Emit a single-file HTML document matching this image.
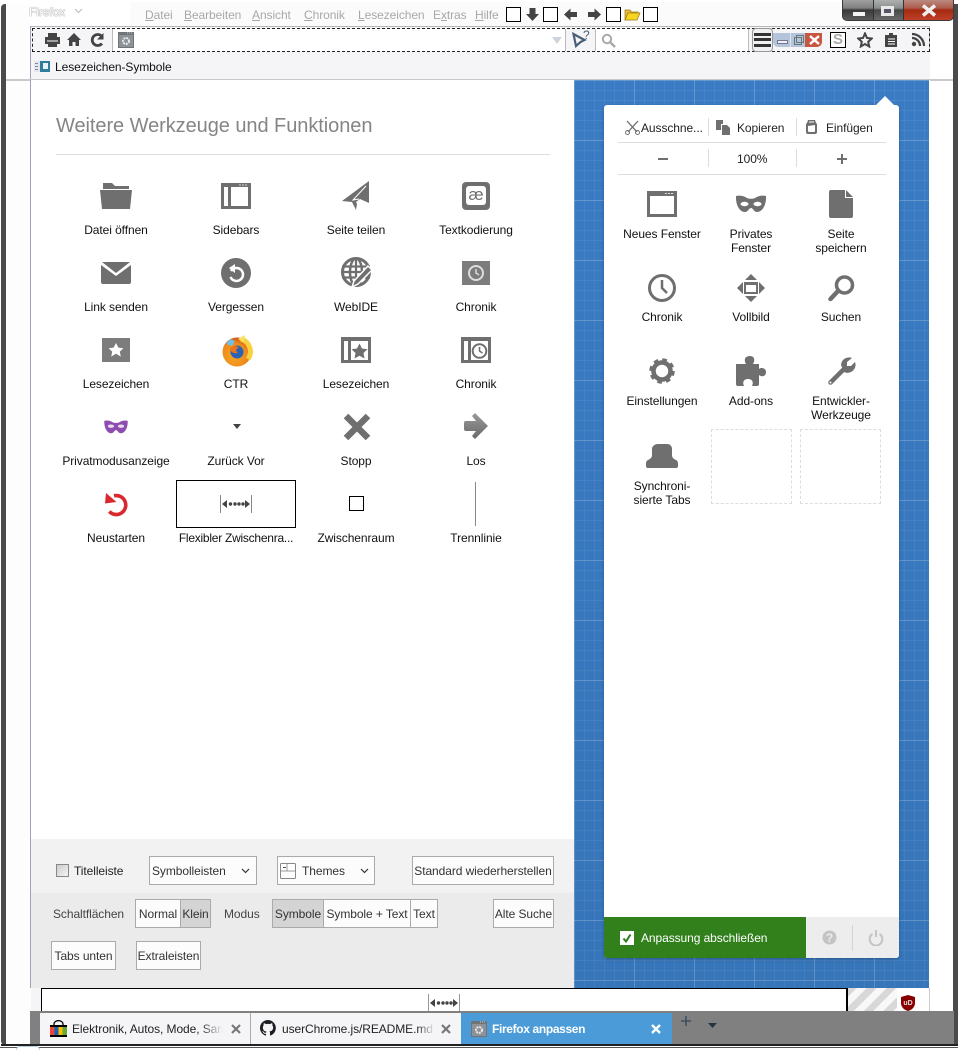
<!DOCTYPE html>
<html lang="de"><head><meta charset="utf-8"><title>Firefox anpassen</title>
<style>
html,body{margin:0;padding:0;width:960px;height:1050px;overflow:hidden;background:#fff}
body{position:relative;font:12px "Liberation Sans",sans-serif;color:#111;letter-spacing:-.08px}
.a,.l,.b,.m,svg{position:absolute}
.l{width:120px;text-align:center;white-space:nowrap;line-height:14px;height:14px}
.w{width:90px;height:auto}
.b{box-sizing:border-box;border:1px solid #aaa;background:#fcfcfc;height:29px;line-height:28px;text-align:center;color:#333;white-space:nowrap}
.m{top:8px;color:#a8a8a8;line-height:14px;white-space:nowrap}
.m u{text-decoration:underline}
.s{position:absolute;box-sizing:border-box;width:15px;height:15px;border:1px solid #000;background:#fff}
.g{fill:#6f6f6f}
.t{color:#222;line-height:14px;white-space:nowrap}
</style></head><body>
<!-- window frame -->
<div class="a" style="left:0;top:0;width:960px;height:1050px;background:#fff"></div>
<div class="a" style="left:1px;top:4px;width:5px;height:1041px;background:#4a4a4a;border-radius:4px 0 0 4px"></div>
<div class="a" style="left:6px;top:4px;width:24px;height:1040px;background:#fdfdfd"></div>
<div class="a" style="left:6px;top:79px;width:24px;height:2px;background:#c9c9c9"></div>
<div class="a" style="left:953px;top:4px;width:5px;height:1041px;background:#4a4a4a"></div>
<div class="a" style="left:930px;top:79px;width:23px;height:2px;background:#c9c9c9"></div>
<div class="a" style="left:1px;top:1044px;width:957px;height:2px;background:#222"></div>
<div class="a" style="left:0;top:1047px;width:958px;height:1px;background:#555"></div>
<div class="a" style="left:16px;top:1046px;width:24px;height:4px;background:#fff;border:1px solid #b5cfe0;border-bottom:0;box-sizing:border-box;border-radius:12px 12px 0 0"></div>
<div class="a" style="left:130px;top:2px;width:710px;height:24px;background:#fbfbfb"></div>
<!-- title -->
<div class="a" style="left:29px;top:5px;color:#fff;font-size:12px;line-height:14px;text-shadow:0 0 1px #888,0 0 1px #888">Firefox</div>
<svg style="left:74px;top:8px" width="9" height="6"><path d="M1 1l3.500 3.500L8 1" fill="none" stroke="#bbb"/></svg>
<div class="m" style="left:145px"><u>D</u>atei</div>
<div class="m" style="left:184px"><u>B</u>earbeiten</div>
<div class="m" style="left:252px"><u>A</u>nsicht</div>
<div class="m" style="left:304px"><u>C</u>hronik</div>
<div class="m" style="left:358px"><u>L</u>esezeichen</div>
<div class="m" style="left:433px">E<u>x</u>tras</div>
<div class="m" style="left:475px"><u>H</u>ilfe</div>
<div class="s" style="left:506px;top:7px"></div>
<svg style="left:525px;top:7px" width="15" height="15"><path d="M4.500 1h6v6H14L7.500 14 1 7h3.500z" fill="#444"/></svg>
<div class="s" style="left:543px;top:7px"></div>
<svg style="left:563px;top:7px" width="15" height="15"><path d="M7.500 1.500L1 7.500l6.500 6V10H14V5H7.500z" fill="#444"/></svg>
<svg style="left:587px;top:7px" width="15" height="15"><path d="M7.500 1.500L14 7.500l-6.500 6V10H1V5h6.500z" fill="#444"/></svg>
<div class="s" style="left:606px;top:7px"></div>
<svg style="left:624px;top:7px" width="17" height="15"><path d="M1 13V3h5l1.500 2H14v2H5z" fill="#e8b93a" stroke="#9a7a10" stroke-width=".7"/><path d="M1 13l3-7h12l-3 7z" fill="#f8d520" stroke="#9a7a10" stroke-width=".7"/></svg>
<div class="s" style="left:643px;top:7px"></div>
<!-- caption buttons -->
<div class="a" style="left:842px;top:0;width:112px;height:21px;border-radius:0 0 5px 5px;background:#333;box-sizing:border-box;border:1px solid #3a3a3a;border-top:0;overflow:hidden">
 <div class="a" style="left:0;top:0;width:30px;height:20px;background:linear-gradient(#a0a0a0 0,#808080 40%,#3a3a3a 50%,#5c5c5c 100%)"></div>
 <div class="a" style="left:31px;top:0;width:29px;height:20px;background:linear-gradient(#aeb0b0 0,#8c8f90 40%,#484848 50%,#6a6a6a 100%)"></div>
 <div class="a" style="left:61px;top:0;width:49px;height:20px;background:linear-gradient(#bb8a80 0,#ad5c4c 40%,#a42a10 50%,#c04028 100%)"></div>
 <div class="a" style="left:10px;top:12px;width:12px;height:4px;background:#f4f4f4"></div>
 <div class="a" style="left:38px;top:6px;width:13px;height:10px;box-sizing:border-box;border:3px solid #e8e8e8;background:#556"></div>
 <svg style="left:77px;top:4px" width="18" height="13"><path d="M3 1.500l12 10M15 1.500l-12 10" stroke="#eee" stroke-width="3.500"/></svg>
</div>
<!-- toolbars -->
<div class="a" style="left:30px;top:26px;width:900px;height:1px;background:#b8b8b8"></div>
<div class="a" style="left:30px;top:27px;width:900px;height:25px;background:#f5f5f7"></div>
<div class="a" style="left:30px;top:26px;width:1px;height:962px;background:#9aa6b4"></div>
<div class="a" style="left:929px;top:26px;width:1px;height:54px;background:#c4c4c4"></div>
<div class="a" style="left:32px;top:28px;width:898px;height:24px;box-sizing:border-box;border:1px dashed #222"></div>
<div class="a" style="left:112px;top:29px;width:453px;height:22px;background:#fff;border-left:1px solid #bbb"></div>
<div class="a" style="left:565px;top:29px;width:1px;height:22px;background:#bbb"></div>
<div class="a" style="left:595px;top:29px;width:152px;height:22px;background:#fff;border-left:1px solid #bbb;border-right:1px solid #bbb"></div>
<svg style="left:44px;top:32px" width="17" height="16"><path d="M4 1h9v4h3v7h-3v3H4v-3H1V5h3z" fill="#444"/><path d="M3 9h11" stroke="#fff"/><path d="M5 3h7" stroke="#444"/></svg>
<svg style="left:66px;top:32px" width="16" height="15"><path d="M8 1L1 8h2v6h3.500v-4h3v4H13V8h2z" fill="#444"/></svg>
<svg style="left:90px;top:32px" width="15" height="15"><path d="M12 11.500A5.500 5.500 0 1 1 11.500 4" fill="none" stroke="#444" stroke-width="2.800"/><path d="M13.500 1v6.500H7z" fill="#444"/></svg>
<svg style="left:118px;top:32px" width="16" height="16"><rect width="16" height="16" fill="#6e7478"/><rect x="1" y="3" width="14" height="12" fill="#8d9296"/><path d="M9 1h5" stroke="#ccc" stroke-dasharray="1 1"/><circle cx="8" cy="9" r="3" fill="none" stroke="#e8e8e8" stroke-width="2" stroke-dasharray="2 .8"/></svg>
<svg style="left:551px;top:36px" width="12" height="9"><path d="M1 1h10L6 8z" fill="#ced4da"/></svg>
<svg style="left:571px;top:30px" width="19" height="18"><path d="M2.500 4l11 6-4 2L5 16z" fill="none" stroke="#4a6078" stroke-width="2.200"/><text x="12" y="9" font-size="12" font-family="Liberation Sans" fill="#4a6078">?</text></svg>
<svg style="left:601px;top:33px" width="15" height="15"><circle cx="6" cy="6" r="4.200" fill="none" stroke="#aaa" stroke-width="2"/><path d="M9 9l5 5" stroke="#aaa" stroke-width="2.500"/></svg>
<div class="a" style="left:752px;top:28px;width:21px;height:24px;box-sizing:border-box;background:#f0f0f0;border:1px solid #999;border-radius:4px"></div>
<div class="a" style="left:754px;top:33px;width:17px;height:3px;background:#333"></div>
<div class="a" style="left:754px;top:38px;width:17px;height:3px;background:#333"></div>
<div class="a" style="left:754px;top:44px;width:17px;height:3px;background:#333"></div>
<div class="a" style="left:773px;top:33px;width:49px;height:14px;border-radius:0 0 5px 5px;background:linear-gradient(90deg,#b4c4da 0,#b4c4da 32px,#c85540 32px);overflow:hidden">
<div class="a" style="left:4px;top:7px;width:9px;height:2px;background:#eef;border:1px solid #778"></div>
<div class="a" style="left:17px;top:0;width:1px;height:14px;background:#dfe7f0"></div>
<div class="a" style="left:21px;top:4px;width:6px;height:6px;border:1px solid #677"></div>
<div class="a" style="left:23px;top:2px;width:6px;height:6px;border:1px solid #677"></div>
<svg style="left:34px;top:1px" width="15" height="12"><path d="M3 2l9 8M12 2l-9 8" stroke="#fff" stroke-width="2.500"/></svg></div>
<div class="a" style="left:830px;top:32px;width:16px;height:16px;box-sizing:border-box;border:1px solid #000;background:#fff;color:#aaa;text-align:center;font:bold 15px/14px 'Liberation Sans',sans-serif">S</div>
<svg style="left:857px;top:32px" width="16" height="16"><path d="M8 1.500l2 4.500 4.800.5-3.600 3.200 1 4.800L8 12l-4.200 2.500 1-4.800L1.200 6.500 6 6z" fill="none" stroke="#444" stroke-width="2"/></svg>
<svg style="left:884px;top:32px" width="15" height="16"><path d="M1 3h4V1h4v2h4v12H1z" fill="#444"/><path d="M4 7h7M4 9.500h7M4 12h7" stroke="#fff"/></svg>
<svg style="left:911px;top:32px" width="15" height="15"><circle cx="3" cy="12" r="2.200" fill="#444"/><path d="M1 6a8 8 0 0 1 8 8M1 2a12 12 0 0 1 12 12" fill="none" stroke="#444" stroke-width="2.300"/></svg>
<!-- bookmarks -->
<div class="a" style="left:31px;top:52px;width:899px;height:27px;background:#f5f5f7"></div>
<div class="a" style="left:30px;top:79px;width:900px;height:1px;background:#c8c8c8"></div>
<svg style="left:34px;top:61px" width="16" height="12"><rect x="0" y="0" width="16" height="11" fill="#e4e8ec"/><rect x="6" y="0" width="10" height="11" fill="#2f7d9c"/><rect x="9" y="2" width="5" height="6" fill="#e8f2f7"/><path d="M1 2.500h3M1 5.500h3M1 8.500h3" stroke="#889"/></svg>
<div class="a t" style="left:55px;top:60px;color:#111">Lesezeichen-Symbole</div>
<!-- content -->
<div class="a" style="left:31px;top:80px;width:543px;height:759px;background:#fff"></div>
<div class="a" style="left:56px;top:114px;font-size:20px;line-height:24px;color:#858585;white-space:nowrap;letter-spacing:-.06px">Weitere Werkzeuge und Funktionen</div>
<div class="a" style="left:56px;top:154px;width:494px;height:1px;background:#ddd"></div>

<svg style="left:100px;top:183px" width="33" height="27"><path class="g" d="M3 0h9l3 3h14v3H3z"/><path class="g" d="M0 7h32l-2 19H2z"/></svg>
<svg style="left:221px;top:183px" width="30" height="26"><path class="g" d="M0 0h30v26H0zM3 4v19h4V4zm7 0v19h17V4z" fill-rule="evenodd"/><path d="M18 2h8" stroke="#ddd" stroke-dasharray="2 1"/></svg>
<svg style="left:342px;top:181px" width="28" height="30"><path class="g" d="M27 0v22L18 18l-4 3 1 2-1 6-4-8L0 20z"/><path d="M24 5L11 19l6-1" fill="none" stroke="#fff"/></svg>
<svg style="left:462px;top:182px" width="28" height="28"><rect width="28" height="28" rx="4" class="g"/><rect x="4" y="4" width="20" height="19" rx="3" fill="#fff"/><text x="14" y="18" font-size="17" text-anchor="middle" font-family="Liberation Sans" fill="#6f6f6f">æ</text></svg>
<svg style="left:101px;top:262px" width="30" height="23"><path class="g" d="M1 0h28l-14 11zM0 3l15 11L30 3v17a2 2 0 0 1-2 2H2a2 2 0 0 1-2-2z"/></svg>
<svg style="left:221px;top:258px" width="30" height="30"><circle cx="15" cy="15" r="15" class="g"/><path d="M10 12a6.500 6.500 0 1 1-.5 6" fill="none" stroke="#fff" stroke-width="2.500" transform="translate(0 1)"/><path d="M14 6v9l-6-5z" fill="#fff"/></svg>
<svg style="left:341px;top:257px" width="32" height="32"><circle cx="15" cy="15" r="13.500" fill="none" stroke="#6f6f6f" stroke-width="3"/><ellipse cx="15" cy="15" rx="6" ry="13.500" fill="none" stroke="#6f6f6f" stroke-width="2.500"/><path d="M1 9.500h28M1 15h28M1 20.500h28M15 1v28" stroke="#6f6f6f" stroke-width="2.200"/><path d="M27 9l4 4-14 14-6 3 2-6z" class="g" stroke="#fff" stroke-width="1.500"/></svg>
<svg style="left:462px;top:261px" width="28" height="24"><rect width="28" height="24" fill="#7c7c7c"/><circle cx="14" cy="12" r="7" fill="none" stroke="#ddd" stroke-width="2"/><path d="M14 8v4l3 2" fill="none" stroke="#ddd" stroke-width="1.500"/></svg>
<svg style="left:102px;top:338px" width="28" height="24"><rect width="28" height="24" fill="#7c7c7c"/><path d="M14 5l2.400 4.600 5 .6-3.600 3.400 1 5L14 15.600 9.200 18.600l1-5L6.600 10.200l5-.6z" fill="#fff"/></svg>
<svg style="left:221px;top:334px" width="32" height="33"><defs><radialGradient id="ff" cx="40%" cy="65%" r="70%"><stop offset="0" stop-color="#f5a623"/><stop offset=".65" stop-color="#ee8a1c"/><stop offset="1" stop-color="#c9491c"/></radialGradient></defs><circle cx="16" cy="18" r="14.500" fill="url(#ff)"/><path d="M20 5a13 13 0 0 1 7 20" fill="none" stroke="#f9d042" stroke-width="5"/><path d="M17 5l7-4-1 8z" fill="#fbe05a"/><circle cx="16" cy="18" r="6.500" fill="#2a62b5"/><path d="M5 10l4-5 5 2-3 5z" fill="#6fc0e8"/><path d="M9 14c4-3 8-2 9 0-3 0-4 3-1 5-4 1-8-1-8-5z" fill="#e8741e"/></svg>
<svg style="left:341px;top:337px" width="30" height="26"><path class="g" d="M0 0h30v26H0zM3 4v19h4V4zm7 0v19h17V4z" fill-rule="evenodd"/><path class="g" d="M18.500 6.500l2.500 5 5.500.7-4 3.800 1 5.500-5-2.800-5 2.800 1-5.500-4-3.800 5.500-.7z"/></svg>
<svg style="left:461px;top:337px" width="30" height="26"><path class="g" d="M0 0h30v26H0zM3 4v19h4V4zm7 0v19h17V4z" fill-rule="evenodd"/><circle cx="18.500" cy="14" r="6.800" fill="none" stroke="#6f6f6f" stroke-width="2"/><path d="M18.500 10v4l3 2" fill="none" stroke="#6f6f6f" stroke-width="1.500"/></svg>
<svg style="left:104px;top:420px" width="24" height="14" viewBox="0 0 30 18"><path d="M0 1C4 0 8 1 11 3c2 1 6 1 8 0 3-2 7-3 11-2 .5 8-3 16-9 16-3 0-4-4-6-4s-3 4-6 4C3 17-.5 9 0 1z" fill="#8e4cb0"/><ellipse cx="8.500" cy="8" rx="4" ry="2.200" fill="#e9dcf0"/><ellipse cx="21.500" cy="8" rx="4" ry="2.200" fill="#e9dcf0"/></svg>
<svg style="left:233px;top:424px" width="8" height="6"><path d="M0 0h8L4 5z" fill="#444"/></svg>
<svg style="left:343px;top:413px" width="28" height="28"><path d="M3 3l22 22M25 3L3 25" stroke="#6f6f6f" stroke-width="6.500"/></svg>
<svg style="left:464px;top:413px" width="25" height="27"><defs><linearGradient id="go" x1="0" y1="0" x2="0" y2="1"><stop offset="0" stop-color="#999"/><stop offset="1" stop-color="#6a6a6a"/></linearGradient></defs><path d="M11 0l13 13-13 13-3-3 4-5H2a2 2 0 0 1-2-2v-6a2 2 0 0 1 2-2h10L8 3z" fill="url(#go)"/></svg>
<svg style="left:105px;top:492px" width="23" height="25"><path d="M9 3.800A9.500 9.500 0 1 1 4.300 19.500" fill="none" stroke="#d9282e" stroke-width="3.600"/><path d="M1 1L0 11.500 11.500 10z" fill="#d9282e"/></svg>
<div class="a" style="left:176px;top:480px;width:120px;height:48px;box-sizing:border-box;border:1px solid #000"></div>
<svg style="left:220px;top:495px" width="33" height="18"><path d="M.5 0v18M31.500 0v18" stroke="#888"/><path d="M2 9l5-4v8zM30 9l-5-4v8z" fill="#444"/><circle cx="10.500" cy="9" r="1.700" fill="#444"/><circle cx="15" cy="9" r="1.700" fill="#444"/><circle cx="19" cy="9" r="1.700" fill="#444"/><circle cx="23" cy="9" r="1.700" fill="#444"/></svg>
<div class="a" style="left:349px;top:496px;width:15px;height:15px;box-sizing:border-box;border:1px solid #000"></div>
<div class="a" style="left:475px;top:482px;width:1px;height:44px;background:#888"></div>

<div class="l" style="left:56px;top:223px">Datei öffnen</div><div class="l" style="left:176px;top:223px">Sidebars</div><div class="l" style="left:296px;top:223px">Seite teilen</div><div class="l" style="left:416px;top:223px">Textkodierung</div>
<div class="l" style="left:56px;top:300px">Link senden</div><div class="l" style="left:176px;top:300px">Vergessen</div><div class="l" style="left:296px;top:300px">WebIDE</div><div class="l" style="left:416px;top:300px">Chronik</div>
<div class="l" style="left:56px;top:377px">Lesezeichen</div><div class="l" style="left:176px;top:377px">CTR</div><div class="l" style="left:296px;top:377px">Lesezeichen</div><div class="l" style="left:416px;top:377px">Chronik</div>
<div class="l" style="left:56px;top:454px">Privatmodusanzeige</div><div class="l" style="left:176px;top:454px">Zurück Vor</div><div class="l" style="left:296px;top:454px">Stopp</div><div class="l" style="left:416px;top:454px">Los</div>
<div class="l" style="left:56px;top:531px">Neustarten</div><div class="l" style="left:176px;top:531px;letter-spacing:-.25px">Flexibler Zwischenra...</div><div class="l" style="left:296px;top:531px">Zwischenraum</div><div class="l" style="left:416px;top:531px">Trennlinie</div>

<!-- controls -->
<div class="a" style="left:31px;top:839px;width:543px;height:54px;background:#f2f2f2"></div>
<div class="a" style="left:31px;top:893px;width:543px;height:95px;background:#ebebeb"></div>
<div class="a" style="left:56px;top:864px;width:13px;height:13px;box-sizing:border-box;border:1px solid #888;background:linear-gradient(135deg,#ccc,#f4f4f4)"></div>
<div class="a t" style="left:74px;top:864px">Titelleiste</div>
<div class="b" style="left:149px;top:856px;width:108px;text-align:left;padding-left:2px">Symbolleisten<svg style="left:91px;top:11px" width="9" height="6"><path d="M1 1l3.500 3.500L8 1" fill="none" stroke="#333" stroke-width="1.200"/></svg></div>
<div class="b" style="left:277px;top:856px;width:98px;text-align:left;padding-left:24px">Themes<svg style="left:2px;top:6px" width="17" height="17"><rect x=".5" y=".5" width="15" height="15" rx="1" fill="#fff" stroke="#888"/><path d="M1 8h14M7 1v7" stroke="#999"/><path d="M3 4.500h3" stroke="#555"/></svg><svg style="left:82px;top:11px" width="9" height="6"><path d="M1 1l3.500 3.500L8 1" fill="none" stroke="#333" stroke-width="1.200"/></svg></div>
<div class="b" style="left:412px;top:856px;width:142px">Standard wiederherstellen</div>
<div class="a t" style="left:53px;top:907px;color:#444">Schaltflächen</div>
<div class="b" style="left:135px;top:899px;width:46px">Normal</div>
<div class="b" style="left:180px;top:899px;width:31px;background:#d4d4d4">Klein</div>
<div class="a t" style="left:224px;top:907px;color:#444">Modus</div>
<div class="b" style="left:272px;top:899px;width:52px;background:#d4d4d4">Symbole</div>
<div class="b" style="left:323px;top:899px;width:88px">Symbole + Text</div>
<div class="b" style="left:410px;top:899px;width:28px">Text</div>
<div class="b" style="left:493px;top:899px;width:61px">Alte Suche</div>
<div class="b" style="left:51px;top:941px;width:65px">Tabs unten</div>
<div class="b" style="left:136px;top:941px;width:65px">Extraleisten</div>

<!-- blue -->
<div class="a" style="left:574px;top:80px;width:355px;height:908px;background-color:#3a7bc3;background-image:linear-gradient(rgba(0,0,0,0),rgba(0,0,0,.05)),linear-gradient(rgba(255,255,255,.16) 1px,transparent 1px),linear-gradient(90deg,rgba(255,255,255,.16) 1px,transparent 1px),linear-gradient(rgba(255,255,255,.06) 1px,transparent 1px),linear-gradient(90deg,rgba(255,255,255,.06) 1px,transparent 1px);background-size:100% 100%,60px 60px,60px 60px,10px 10px,10px 10px"></div>
<!-- panel -->
<div class="a" style="left:604px;top:105px;width:295px;height:853px;background:#fff;border-radius:3px;box-shadow:0 1px 3px rgba(0,0,0,.25)"></div>
<svg style="left:875px;top:96px" width="20" height="10"><path d="M0 10L10 0l10 10z" fill="#fff"/></svg>
<svg style="left:625px;top:120px" width="15" height="15"><path d="M2 1l10 11M13 1L3 12" stroke="#6f6f6f" stroke-width="1.300"/><circle cx="2.500" cy="12.500" r="2" fill="none" stroke="#6f6f6f"/><circle cx="12.500" cy="12.500" r="2" fill="none" stroke="#6f6f6f"/></svg>
<div class="a t" style="left:641px;top:121px">Ausschne...</div>
<div class="a" style="left:708px;top:118px;width:1px;height:18px;background:#ddd"></div>
<svg style="left:716px;top:120px" width="15" height="15"><path class="g" d="M0 0h7v4H5v6H0zM6 5h5l3 3v7H6z"/></svg>
<div class="a t" style="left:737px;top:121px">Kopieren</div>
<div class="a" style="left:796px;top:118px;width:1px;height:18px;background:#ddd"></div>
<svg style="left:805px;top:119px" width="13" height="15"><path d="M3 1h7l1 3 1 1v8a2 2 0 0 1-2 2H3a2 2 0 0 1-2-2V5l1-1z" class="g"/><path d="M3 7l7-1v6a1 1 0 0 1-1 1H4a1 1 0 0 1-1-1z" fill="#fff"/><path d="M4 3h5" stroke="#fff"/></svg>
<div class="a t" style="left:826px;top:121px">Einfügen</div>
<div class="a" style="left:618px;top:142px;width:268px;height:1px;background:#ddd"></div>
<div class="a" style="left:658px;top:158px;width:10px;height:2px;background:#6f6f6f"></div>
<div class="a" style="left:708px;top:149px;width:1px;height:18px;background:#ddd"></div>
<div class="a t" style="left:737px;top:152px">100%</div>
<div class="a" style="left:796px;top:149px;width:1px;height:18px;background:#ddd"></div>
<div class="a" style="left:837px;top:158px;width:10px;height:2px;background:#6f6f6f"></div>
<div class="a" style="left:841px;top:154px;width:2px;height:10px;background:#6f6f6f"></div>
<div class="a" style="left:618px;top:174px;width:268px;height:1px;background:#ddd"></div>

<svg style="left:647px;top:191px" width="30" height="26"><path class="g" d="M0 0h30v26H0zM3 5v18h24V5z" fill-rule="evenodd"/><path d="M18 2.500h9" stroke="#ddd" stroke-dasharray="2 1"/></svg>
<svg style="left:736px;top:195px" width="30" height="18"><path class="g" d="M0 1C4 0 8 1 11 3c2 1 6 1 8 0 3-2 7-3 11-2 .5 8-3 16-9 16-3 0-4-4-6-4s-3 4-6 4C3 17-.5 9 0 1z"/><ellipse cx="8.500" cy="9" rx="4" ry="2.200" fill="#fff"/><ellipse cx="21.500" cy="9" rx="4" ry="2.200" fill="#fff"/></svg>
<svg style="left:829px;top:190px" width="24" height="28"><path class="g" d="M2 0h14v8h8v18a2 2 0 0 1-2 2H2a2 2 0 0 1-2-2V2a2 2 0 0 1 2-2zM17 0l7 7h-7z"/></svg>
<svg style="left:648px;top:274px" width="28" height="28"><circle cx="14" cy="14" r="12.500" fill="none" stroke="#6f6f6f" stroke-width="3"/><path d="M14 6v8l5 5" fill="none" stroke="#6f6f6f" stroke-width="2.500"/></svg>
<svg style="left:737px;top:274px" width="28" height="28"><path class="g" d="M14 0l6 6H8zM14 28l6-6H8zM0 14l6-6v12zM28 14l-6-6v12z"/><rect x="8" y="9" width="12" height="10" fill="none" stroke="#6f6f6f" stroke-width="2"/><path d="M8 10h12" stroke="#6f6f6f" stroke-width="2"/></svg>
<svg style="left:828px;top:275px" width="27" height="27"><circle cx="16.500" cy="10" r="8" fill="none" stroke="#6f6f6f" stroke-width="3.500"/><path d="M10 16L2.500 24" stroke="#6f6f6f" stroke-width="4.500" stroke-linecap="round"/></svg>
<svg style="left:649px;top:358px" width="26" height="26"><circle cx="13" cy="13" r="8.500" fill="none" stroke="#6f6f6f" stroke-width="4.500"/><circle cx="13" cy="13" r="11" fill="none" stroke="#6f6f6f" stroke-width="3.500" stroke-dasharray="4.500 4.140"/></svg>
<svg style="left:736px;top:356px" width="31" height="31"><path class="g" d="M0 8h10C8 5 8 0 14 0c5 0 5 5 3 8h6v5c2-2 7-1 7 3 0 5-5 5-7 3v9a2 2 0 0 1-2 2h-5c2-4 0-7-4-7s-6 3-4 7H2a2 2 0 0 1-2-2z"/></svg>
<svg style="left:827px;top:357px" width="29" height="29"><path d="M3.500 25.500L16 13" stroke="#6f6f6f" stroke-width="4.500" stroke-linecap="round"/><path class="g" d="M14 8a8 8 0 0 1 11-7l-5 4v4h4l4-4a8 8 0 0 1-11 10z"/><circle cx="3.500" cy="25.500" r="1" fill="#fff"/></svg>
<svg style="left:646px;top:444px" width="33" height="25"><path class="g" d="M12 0h9c3 0 5 2 5 5v6c0 3 2 4 4 5s2 3 2 4v2a2 2 0 0 1-2 2H2a2 2 0 0 1-2-2v-2c0-1 0-3 2-4s4-2 4-5V5c0-3 3-5 6-5z"/></svg>

<div class="l w" style="left:617px;top:227px">Neues Fenster</div>
<div class="l w" style="left:706px;top:227px">Privates<br>Fenster</div>
<div class="l w" style="left:796px;top:227px">Seite<br>speichern</div>
<div class="l w" style="left:617px;top:310px">Chronik</div>
<div class="l w" style="left:706px;top:310px">Vollbild</div>
<div class="l w" style="left:796px;top:310px">Suchen</div>
<div class="l w" style="left:617px;top:394px">Einstellungen</div>
<div class="l w" style="left:706px;top:394px">Add-ons</div>
<div class="l w" style="left:796px;top:394px">Entwickler-<br>Werkzeuge</div>
<div class="l w" style="left:617px;top:479px">Synchroni-<br>sierte Tabs</div>
<div class="a" style="left:711px;top:429px;width:81px;height:75px;box-sizing:border-box;border:1px dashed #ddd"></div>
<div class="a" style="left:800px;top:429px;width:81px;height:75px;box-sizing:border-box;border:1px dashed #ddd"></div>

<div class="a" style="left:604px;top:917px;width:202px;height:41px;background:#31801c;border-radius:0 0 0 3px"></div>
<div class="a" style="left:806px;top:917px;width:93px;height:41px;background:#ededed;border-radius:0 0 3px 0"></div>
<div class="a" style="left:620px;top:931px;width:14px;height:14px;background:#fff"></div>
<svg style="left:621px;top:932px" width="12" height="12"><path d="M2.500 6.500L5 9.500l4.500-7" fill="none" stroke="#2c7a18" stroke-width="2"/></svg>
<div class="a t" style="left:641px;top:931px;color:#fff">Anpassung abschließen</div>
<svg style="left:822px;top:930px" width="15" height="15"><circle cx="7.500" cy="7.500" r="7" fill="#c4c4c4"/><text x="7.500" y="12" font-size="12" font-weight="bold" text-anchor="middle" font-family="Liberation Sans" fill="#ededed">?</text></svg>
<div class="a" style="left:852px;top:925px;width:1px;height:26px;background:#d4d4d4"></div>
<svg style="left:868px;top:930px" width="16" height="16"><path d="M4.500 4a6.300 6.300 0 1 0 7 0" fill="none" stroke="#c4c4c4" stroke-width="2"/><path d="M8 0v7" stroke="#c4c4c4" stroke-width="2"/></svg>

<!-- bottom bar -->
<div class="a" style="left:31px;top:988px;width:899px;height:23px;background:#f5f5f7"></div>
<div class="a" style="left:41px;top:988px;width:806px;height:23px;box-sizing:border-box;border:1px solid #000;border-bottom:0;background:#fff"></div>
<svg style="left:428px;top:994px" width="32" height="17"><path d="M.5 0v17M31.500 0v17" stroke="#999"/><path d="M2 9l5-4v8zM30 9l-5-4v8z" fill="#444"/><circle cx="10.500" cy="9" r="1.700" fill="#444"/><circle cx="15" cy="9" r="1.700" fill="#444"/><circle cx="19" cy="9" r="1.700" fill="#444"/><circle cx="23" cy="9" r="1.700" fill="#444"/></svg>
<div class="a" style="left:847px;top:988px;width:50px;height:23px;background:repeating-linear-gradient(135deg,#d8d8d8 0,#d8d8d8 7px,#f8f8f8 7px,#f8f8f8 14px)"></div>
<div class="a" style="left:847px;top:988px;width:1px;height:23px;background:#000"></div>
<div class="a" style="left:897px;top:988px;width:32px;height:23px;background:#fff"></div>
<svg style="left:900px;top:995px" width="16" height="16"><path d="M8 0l7 2v6c0 4-3 7-7 8-4-1-7-4-7-8V2z" fill="#800"/><text x="8" y="10" font-size="7" font-weight="bold" text-anchor="middle" font-family="Liberation Sans" fill="#ddd">uD</text></svg>
<div class="a" style="left:929px;top:988px;width:1px;height:23px;background:#ccc"></div>
<!-- tabs -->
<div class="a" style="left:30px;top:1011px;width:924px;height:33px;background:#808080"></div>
<div class="a" style="left:40px;top:1013px;width:210px;height:31px;background:#f5f5f7"></div>
<div class="a" style="left:250px;top:1013px;width:211px;height:31px;background:#f5f5f7;border-left:1px solid #aaa;box-sizing:border-box"></div>
<div class="a" style="left:461px;top:1013px;width:211px;height:31px;background:#4a9bd8"></div>
<svg style="left:50px;top:1020px" width="17" height="17"><path d="M4 6V4a4 3 0 0 1 9 0v2" fill="none" stroke="#000" stroke-width="1.300"/><rect x="0" y="5" width="17" height="2" fill="#000"/><rect x="0" y="7" width="4.500" height="8" fill="#e43"/><rect x="4.500" y="7" width="4" height="8" fill="#16b"/><rect x="8.500" y="7" width="4" height="8" fill="#fb0"/><rect x="12.500" y="7" width="4.500" height="8" fill="#6a3"/><rect x="0" y="15" width="17" height="2" fill="#000"/></svg>
<div class="a t" style="left:72px;top:1022px;width:151px;overflow:hidden;-webkit-mask-image:linear-gradient(90deg,#000 85%,transparent)">Elektronik, Autos, Mode, Sammlerst</div>
<svg style="left:231px;top:1024px" width="10" height="10"><path d="M1 1l8 8M9 1l-8 8" stroke="#777" stroke-width="2.200"/></svg>
<svg style="left:260px;top:1020px" width="16" height="16"><path fill="#1b1f23" d="M8 0a8 8 0 0 0-2.500 15.600c.4.100.5-.2.500-.4v-1.400c-2.200.5-2.700-1-2.700-1-.4-.9-.9-1.200-.9-1.200-.7-.5.100-.5.100-.5.800.100 1.200.8 1.200.8.700 1.200 1.900.9 2.300.7.100-.5.300-.9.500-1.100-1.800-.2-3.600-.9-3.600-4 0-.9.300-1.600.8-2.100-.1-.2-.4-1 .1-2.100 0 0 .7-.2 2.200.8a7.600 7.600 0 0 1 4 0c1.500-1 2.200-.8 2.200-.8.400 1.100.2 1.900.1 2.100.5.600.8 1.300.8 2.100 0 3.100-1.900 3.700-3.700 3.900.3.300.6.800.6 1.500v2.200c0 .2.100.5.600.4A8 8 0 0 0 8 0z"/></svg>
<div class="a t" style="left:282px;top:1022px;width:153px;overflow:hidden;-webkit-mask-image:linear-gradient(90deg,#000 88%,transparent)">userChrome.js/README.md at master</div>
<svg style="left:441px;top:1024px" width="10" height="10"><path d="M1 1l8 8M9 1l-8 8" stroke="#777" stroke-width="2.200"/></svg>
<svg style="left:471px;top:1021px" width="16" height="16"><rect width="16" height="16" fill="#6e7478"/><rect x="1" y="3" width="14" height="12" fill="#8d9296"/><path d="M9 1h5" stroke="#ccc" stroke-dasharray="1 1"/><circle cx="8" cy="9" r="3" fill="none" stroke="#e8e8e8" stroke-width="2" stroke-dasharray="2 .8"/></svg>
<div class="a t" style="left:492px;top:1022px;color:#fff;font-weight:bold;letter-spacing:-.35px">Firefox anpassen</div>
<svg style="left:651px;top:1024px" width="10" height="10"><path d="M1 1l8 8M9 1l-8 8" stroke="#fff" stroke-width="2.400"/></svg>
<svg style="left:680px;top:1015px" width="12" height="12"><path d="M6 1v10M1 6h10" stroke="#3e4f60" stroke-width="1.600"/></svg>
<svg style="left:708px;top:1023px" width="9" height="6"><path d="M0 0h9L4.500 5z" fill="#263340"/></svg>
</body></html>
